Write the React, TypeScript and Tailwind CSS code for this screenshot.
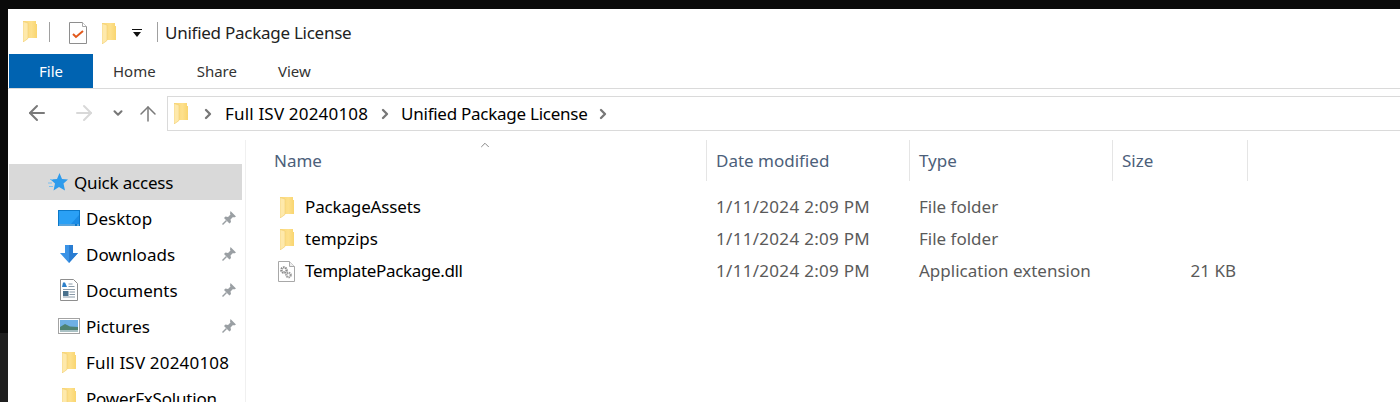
import { ArrowLeft, ArrowRight, ArrowUp, ChevronDown, ChevronRight, ChevronUp } from "lucide-react";

const Folder = ({ className = "" }: { className?: string }) => (
  <svg viewBox="1 1 14 21" className={className}>
    <defs>
      <linearGradient id="folderBody" x1="0" y1="0" x2="1" y2="0">
        <stop offset="0" stopColor="#fbd877" />
        <stop offset="0.6" stopColor="#fde08c" />
        <stop offset="1" stopColor="#f9d56f" />
      </linearGradient>
    </defs>
    <path d="M1 1h13v3h1v14H6v.500L1 22z" fill="url(#folderBody)" />
    <path d="M1 1.500L6 3v15.500L1 22z" fill="#fee9ab" />
    <path d="M1 1.500L6 3v15.500L2 21.500 1 22z" fill="none" stroke="#efcb6c" strokeWidth=".5" />
  </svg>
);

const Pin = () => (
  <svg viewBox="0 0 16 16" className="ml-auto mr-[5px] h-[16px] w-[16px]">
    <path d="M9.500 1l5.500 5.500-2 1-1-.5-2.500 2.500.5 2.500-1.500 1.500L3 8l1.500-1.500 2.500.5L9.500 4.500 9 3.500z" fill="#9a9fa3" />
    <path d="M5.500 10.500L1.500 14.500" stroke="#9a9fa3" strokeWidth="1.500" />
  </svg>
);

const DesktopIcon = () => (
  <svg viewBox="0 0 22 16" className="h-[16px] w-[22px]">
    <rect width="22" height="16" fill="#0c78c8" />
    <path d="M1 1h20v13H1z" fill="#2aa0f5" />
    <path d="M13 14L21 5v9z" fill="#1b8ce6" />
    <path d="M1 15h16M19 15h2" stroke="#cfe9fb" strokeWidth=".8" />
  </svg>
);

const DownloadIcon = () => (
  <svg viewBox="0 0 20 20" className="h-[20px] w-[20px]">
    <path d="M6 1h8v8h5l-9 10L1 9h5z" fill="#3b93e6" />
    <path d="M10 1h4v8h5l-9 10z" fill="#2a7dd2" />
  </svg>
);

const DocumentIcon = () => (
  <svg viewBox="0 0 18 22" className="h-[22px] w-[18px]">
    <path d="M.5.500h13l4 4v17H.5z" fill="#fff" stroke="#8e8e8e" />
    <path d="M3 3.500h2l2 4.500H2z" fill="#2c7fc9" />
    <path d="M8.500 5h4M8.500 7.500h6M3 10.500h12M9.500 13h5.500M9.500 15.500h5.500M3 18h12" stroke="#8a9aa8" />
    <path d="M3 12h5.500v5H3z" fill="#49708c" />
  </svg>
);

const PictureIcon = () => (
  <svg viewBox="0 0 22 16" className="h-[16px] w-[22px]">
    <rect x=".5" y=".5" width="21" height="15" fill="#fff" stroke="#a3a3a3" />
    <rect x="2" y="2" width="18" height="12" fill="#6fb0e4" />
    <path d="M2 9l5-3 5 2.500 8 .5v5H2z" fill="#4e8272" />
    <path d="M2 12h18v2H2z" fill="#a9c1c4" />
  </svg>
);

const StarIcon = () => (
  <svg viewBox="0 0 20 18" className="h-[18px] w-[20px]">
    <path d="M11.500 0L14 6l6 .5-4.500 4 1.500 7-6-3.500-5.500 3.500 1.500-7-4.500-4L9 6z" fill="#2d9bec" />
    <path d="M2 6.500h3M0 10h4M1 13.500h4" stroke="#7cc0f0" strokeWidth="1" />
  </svg>
);

const DllIcon = () => (
  <svg viewBox="0 0 17 21" className="h-[21px] w-[17px]">
    <path d="M.5.500h11l5 5v15H.5z" fill="#fff" stroke="#a8a8a8" />
    <path d="M11.500.500v5h5" fill="#eee" stroke="#a8a8a8" />
    <circle cx="6" cy="9" r="2.600" fill="none" stroke="#8a8a8a" strokeWidth="2.400" strokeDasharray="1.500 .7" />
    <circle cx="10.500" cy="14" r="2.200" fill="none" stroke="#9c9c9c" strokeWidth="2.200" strokeDasharray="1.300 .6" />
  </svg>
);

const CheckDoc = () => (
  <svg viewBox="0 0 18 22" className="h-[22px] w-[18px]">
    <path d="M.5.500h13l4 4v17H.5z" fill="#fff" stroke="#8e8e8e" />
    <path d="M13.500.500v4h4" fill="#fff" stroke="#a8a8a8" />
    <path d="M4 12l3 3 7-6" fill="none" stroke="#e2591c" strokeWidth="2" />
  </svg>
);

const folderIcon = <Folder className="h-[21px] w-[14px]" />;

const navItems = [
  { label: "Desktop", icon: <DesktopIcon />, pin: true, track: "" },
  { label: "Downloads", icon: <DownloadIcon />, pin: true, track: "" },
  { label: "Documents", icon: <DocumentIcon />, pin: true, track: "" },
  { label: "Pictures", icon: <PictureIcon />, pin: true, track: "" },
  { label: "Full ISV 20240108", icon: folderIcon, pin: false, track: "tracking-[0.18px]" },
  { label: "PowerFxSolution", icon: folderIcon, pin: false, track: "tracking-[-0.2px]" },
];

const files = [
  { name: "PackageAssets", type: "File folder", size: "", icon: folderIcon, track: "tracking-[-0.15px]" },
  { name: "tempzips", type: "File folder", size: "", icon: folderIcon, track: "" },
  { name: "TemplatePackage.dll", type: "Application extension", size: "21 KB", icon: <DllIcon />, track: "tracking-[-0.35px]" },
];

const App = () => {
  return (
    <div className="flex h-[402px] w-[1400px] flex-col overflow-hidden bg-[#0a0a0a] pt-[9px] text-[17px] text-black [font-family:'Noto_Sans',sans-serif]">
      <div className="flex min-h-0 flex-1">
        {/* dark desktop strip */}
        <div className="flex w-[8px] shrink-0 flex-col">
          <div className="h-[324px] bg-[#0a0a0a]" />
          <div className="flex-1 bg-[#1f1f1f]" />
        </div>

        <div className="flex min-w-0 flex-1 flex-col bg-white">
          {/* title bar */}
          <div className="flex h-[45px] items-center pl-[15px]">
            {folderIcon}
            <div className="ml-[12px] h-[20px] w-px bg-[#a0a0a0]" />
            <div className="ml-[19px] mt-[3px]"><CheckDoc /></div>
            <Folder className="ml-[15px] mt-[4px] h-[21px] w-[14px]" />
            <svg viewBox="0 0 10 9" className="ml-[16px] mt-[3px] h-[9px] w-[10px]">
              <path d="M0 .5h10" stroke="#111" />
              <path d="M1 3h8L5 8z" fill="#111" />
            </svg>
            <div className="ml-[15px] h-[20px] w-px bg-[#a0a0a0]" />
            <span className="ml-[7px] whitespace-nowrap pt-[2px] tracking-[-0.26px] text-[#222]">Unified Package License</span>
          </div>

          {/* ribbon tabs */}
          <div className="flex h-[35px] border-b border-[#dadada] pl-px text-[15px] text-[#333]">
            <div className="flex h-[34px] w-[84px] items-center justify-center bg-[#0063b1] text-white">File</div>
            <div className="ml-[20px] flex items-center">Home</div>
            <div className="ml-[41px] flex items-center">Share</div>
            <div className="ml-[41px] flex items-center">View</div>
          </div>

          {/* address bar */}
          <div className="flex h-[51px] items-start pt-[7px]">
            <ArrowLeft className="ml-[17px] mt-[5px] h-[24px] w-[24px] text-[#7a7a7a]" strokeWidth={2} />
            <ArrowRight className="ml-[23px] mt-[5px] h-[24px] w-[24px] text-[#d8d8d8]" strokeWidth={2} />
            <ChevronDown className="ml-[15px] mt-[10px] h-[14px] w-[14px] text-[#777]" strokeWidth={3.500} />
            <ArrowUp className="ml-[11px] mt-[6px] h-[24px] w-[24px] text-[#7a7a7a]" strokeWidth={1.500} />
            <div className="ml-[7px] flex h-[35px] flex-1 items-center border-y border-l border-[#dadada] pl-[6px]">
              {folderIcon}
              <ChevronRight className="ml-[12px] h-[16px] w-[16px] text-[#777]" strokeWidth={3.500} />
              <span className="ml-[9px] tracking-[0.18px]">Full ISV 20240108</span>
              <ChevronRight className="ml-[9px] h-[16px] w-[16px] text-[#777]" strokeWidth={3.500} />
              <span className="ml-[8px] tracking-[-0.26px]">Unified Package License</span>
              <ChevronRight className="ml-[8px] h-[16px] w-[16px] text-[#777]" strokeWidth={3.500} />
            </div>
          </div>

          <div className="flex min-h-0 flex-1">
            {/* sidebar */}
            <div className="w-[238px] shrink-0 overflow-hidden border-r border-[#f0f0f0] pt-[24px]">
              <div className="ml-px mr-[3px] flex h-[36px] items-center bg-[#d9d9d9] pl-[39px]">
                <StarIcon />
                <span className="ml-[6px] pt-[2px] tracking-[-0.2px]">Quick access</span>
              </div>
              {navItems.map((item) => (
                <div key={item.label} className="flex h-[36px] items-center pr-[3px]">
                  <div className="ml-[50px] flex w-[22px] justify-center">{item.icon}</div>
                  <span className={`ml-[6px] whitespace-nowrap pt-[2px] ${item.track}`}>{item.label}</span>
                  {item.pin && <Pin />}
                </div>
              ))}
            </div>

            {/* file list */}
            <div className="relative flex-1">
              <ChevronUp className="absolute left-[231px] top-[-2px] h-[14px] w-[16px] text-[#777]" strokeWidth={1.500} />
              <div className="ml-px grid h-[41px] grid-cols-[460px_203px_203px_135px] text-[#4c607a]">
                <div className="flex items-center border-r border-[#e5e5e5] pl-[27px]">Name</div>
                <div className="flex items-center border-r border-[#e5e5e5] pl-[9px]">Date modified</div>
                <div className="flex items-center border-r border-[#e5e5e5] pl-[9px]">Type</div>
                <div className="flex items-center border-r border-[#e5e5e5] pl-[9px]">Size</div>
              </div>
              <div className="mt-[10px]">
                {files.map((file) => (
                  <div key={file.name} className="ml-px grid h-[32px] grid-cols-[460px_203px_203px_123px] items-center">
                    <div className="flex items-center pl-[31px]">
                      <div className="flex w-[17px] justify-center">{file.icon}</div>
                      <span className={`ml-[10px] ${file.track}`}>{file.name}</span>
                    </div>
                    <div className="pl-[9px] tracking-[0.3px] text-[#5a5a5a]">1/11/2024 2:09 PM</div>
                    <div className="pl-[9px] text-[#5a5a5a]">{file.type}</div>
                    <div className="text-right text-[#5a5a5a]">{file.size}</div>
                  </div>
                ))}
              </div>
            </div>
          </div>
        </div>
      </div>
    </div>
  );
};

export default App;
